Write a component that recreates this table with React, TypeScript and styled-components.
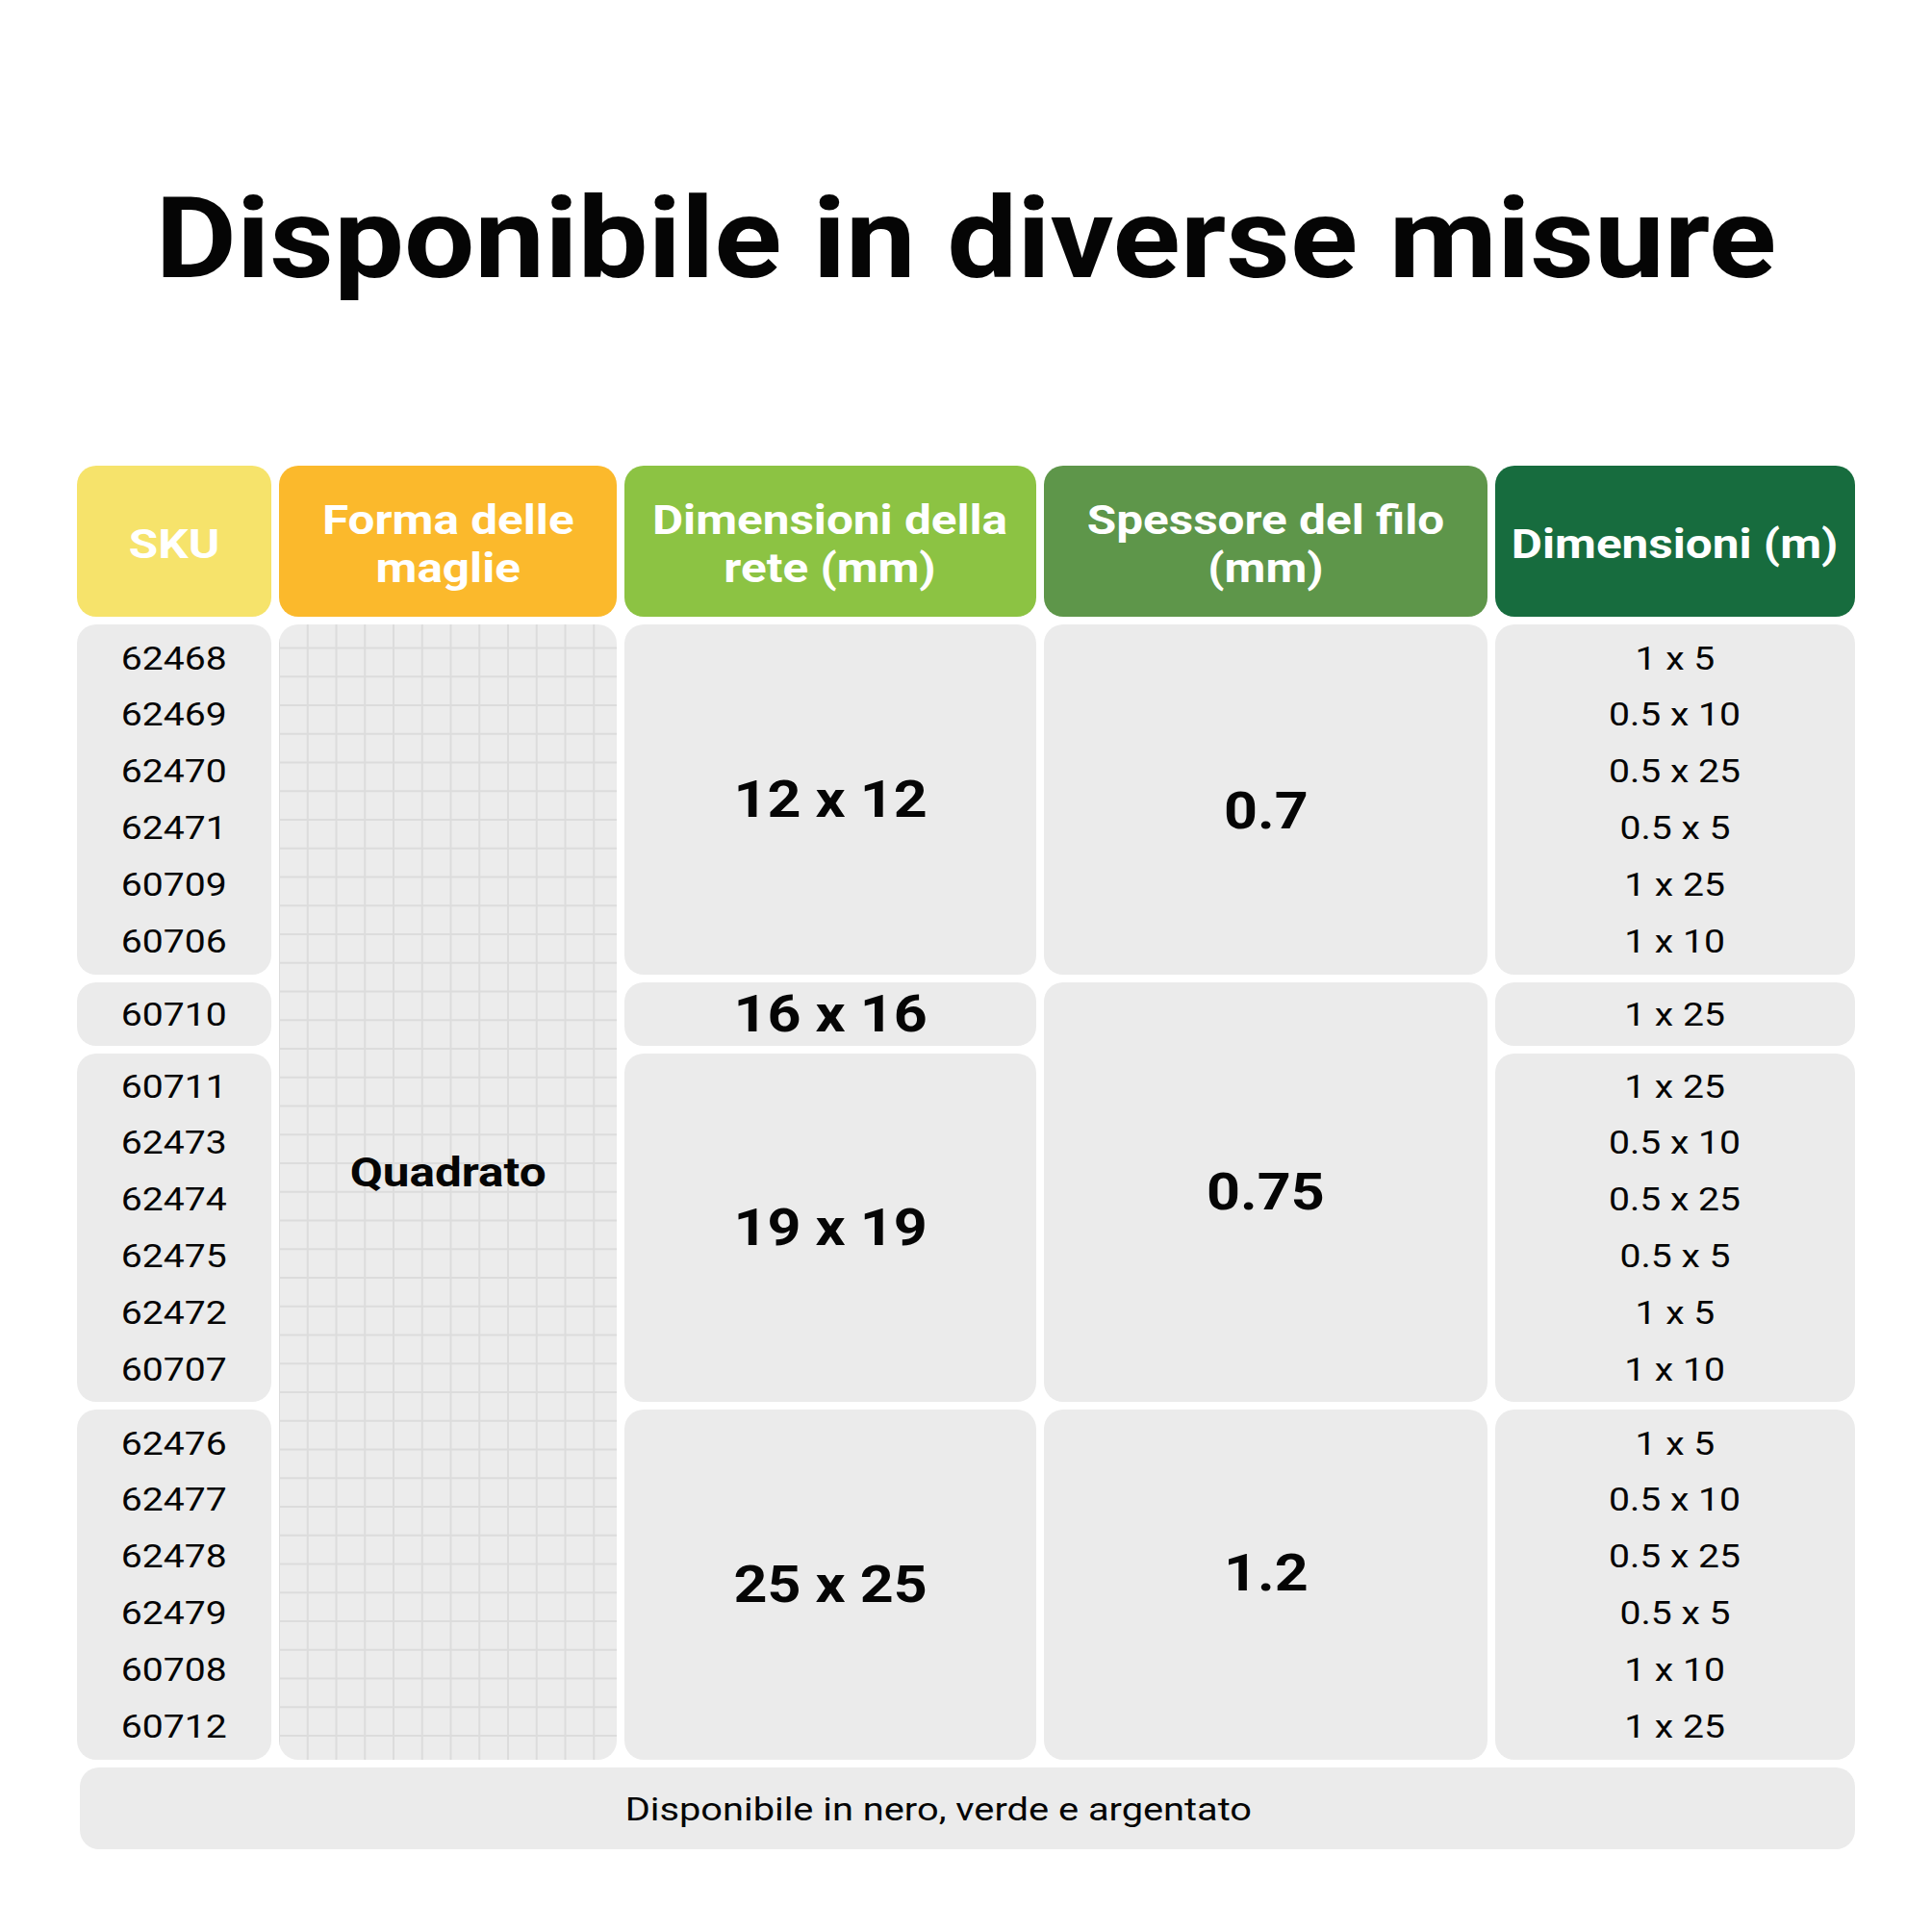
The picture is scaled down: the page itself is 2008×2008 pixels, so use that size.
import React from "react";
import styled, { createGlobalStyle } from "styled-components";

const Global = createGlobalStyle`
  html, body { margin: 0; padding: 0; background: #ffffff; }
  body { font-family: Roboto, "Liberation Sans", Arial, sans-serif; color: #0a0a0a; }
`;

const Page = styled.div`
  width: 2008px;
  height: 2008px;
  box-sizing: border-box;
  padding: 190px 80px 0 80px;
  background: #ffffff;
  display: flex;
  flex-direction: column;
  align-items: stretch;
`;

const Title = styled.h1`
  margin: 0 0 177px 0;
  height: 117px;
  font-family: Roboto, "Liberation Sans", sans-serif;
  font-weight: 700;
  font-size: 117px;
  line-height: 117px;
  color: #050505;
  text-align: center;
  white-space: nowrap;
`;

const Stretch = styled.span<{ $sx?: number }>`
  display: inline-block;
  transform: scaleX(${(p) => p.$sx ?? 1.15});
  transform-origin: center;
`;

const Table = styled.div`
  display: grid;
  grid-template-columns: 202px 351px 428px 461px 374px;
  grid-template-rows: 157px 364px 66px 362px 364px 85px;
  column-gap: 8px;
  row-gap: 8px;
`;

const Head = styled.div<{ $bg: string }>`
  background: ${(p) => p.$bg};
  border-radius: 20px;
  display: flex;
  align-items: center;
  justify-content: center;
  text-align: center;
  color: #ffffff;
  font-weight: 700;
  font-size: 43px;
  line-height: 50px;
  padding-top: 4px;
  box-sizing: border-box;
`;

const Cell = styled.div<{ $col: number; $row: string }>`
  grid-column: ${(p) => p.$col};
  grid-row: ${(p) => p.$row};
  background: #ebebeb;
  border-radius: 20px;
  display: flex;
  flex-direction: column;
  align-items: center;
  justify-content: center;
  box-sizing: border-box;
`;

const Line = styled.div`
  height: 58.8px;
  line-height: 58.8px;
  font-size: 34px;
  font-weight: 400;
  color: #050505;
  white-space: nowrap;
`;

const Big = styled.div<{ $dy?: number }>`
  font-size: 54px;
  line-height: 60px;
  font-weight: 700;
  color: #050505;
  white-space: nowrap;
  margin-top: ${(p) => (p.$dy ?? 0) * 2}px;
`;

const Mesh = styled.div`
  grid-column: 2;
  grid-row: 2 / 6;
  border-radius: 20px;
  background-color: #ececec;
  background-image:
    linear-gradient(to right, #dcdcdc 2px, transparent 2px),
    linear-gradient(to bottom, #dcdcdc 2px, transparent 2px);
  background-size: 29.75px 29.75px;
  background-position: -1px 23.5px;
  display: flex;
  align-items: center;
  justify-content: center;
  padding-bottom: 42px;
  box-sizing: border-box;
`;

const MeshLabel = styled.div`
  font-size: 43px;
  font-weight: 700;
  color: #050505;
  line-height: 50px;
`;

const Footer = styled.div`
  grid-column: 1 / -1;
  grid-row: 6;
  margin-left: 3px;
  background: #ebebeb;
  border-radius: 20px;
  display: flex;
  align-items: center;
  justify-content: center;
  padding-right: 60px;
  font-size: 34px;
  color: #050505;
`;

type Group = {
  row: string;
  skus: string[];
  dims: string[];
};

const groups: Group[] = [
  {
    row: "2",
    skus: ["62468", "62469", "62470", "62471", "60709", "60706"],
    dims: ["1 x 5", "0.5 x 10", "0.5 x 25", "0.5 x 5", "1 x 25", "1 x 10"],
  },
  { row: "3", skus: ["60710"], dims: ["1 x 25"] },
  {
    row: "4",
    skus: ["60711", "62473", "62474", "62475", "62472", "60707"],
    dims: ["1 x 25", "0.5 x 10", "0.5 x 25", "0.5 x 5", "1 x 5", "1 x 10"],
  },
  {
    row: "5",
    skus: ["62476", "62477", "62478", "62479", "60708", "60712"],
    dims: ["1 x 5", "0.5 x 10", "0.5 x 25", "0.5 x 5", "1 x 10", "1 x 25"],
  },
];

const rete = [
  { row: "2", v: "12 x 12" },
  { row: "3", v: "16 x 16" },
  { row: "4", v: "19 x 19" },
  { row: "5", v: "25 x 25" },
];

const spessore = [
  { row: "2", v: "0.7", dy: 12 },
  { row: "3 / 5", v: "0.75", dy: 0 },
  { row: "5", v: "1.2", dy: -12 },
];

export default function App() {
  return (
    <>
      <Global />
      <Page>
        <Title>
          <Stretch $sx={1.11}>Disponibile in diverse misure</Stretch>
        </Title>
        <Table>
          <Head $bg="#f6e36b">
            <Stretch>SKU</Stretch>
          </Head>
          <Head $bg="#fbb92c">
            <Stretch>
              Forma delle
              <br />
              maglie
            </Stretch>
          </Head>
          <Head $bg="#8cc343">
            <Stretch>
              Dimensioni della
              <br />
              rete (mm)
            </Stretch>
          </Head>
          <Head $bg="#5e964a">
            <Stretch>
              Spessore del filo
              <br />
              (mm)
            </Stretch>
          </Head>
          <Head $bg="#176c3e">
            <Stretch>Dimensioni (m)</Stretch>
          </Head>

          {groups.map((g) => (
            <Cell key={"sku" + g.row} $col={1} $row={g.row}>
              {g.skus.map((s) => (
                <Line key={s}>
                  <Stretch>{s}</Stretch>
                </Line>
              ))}
            </Cell>
          ))}

          <Mesh>
            <MeshLabel>
              <Stretch>Quadrato</Stretch>
            </MeshLabel>
          </Mesh>

          {rete.map((r) => (
            <Cell key={"rete" + r.row} $col={3} $row={r.row}>
              <Big>
                <Stretch $sx={1.13}>{r.v}</Stretch>
              </Big>
            </Cell>
          ))}

          {spessore.map((s) => (
            <Cell key={"sp" + s.row} $col={4} $row={s.row}>
              <Big $dy={s.dy}>
                <Stretch $sx={1.13}>{s.v}</Stretch>
              </Big>
            </Cell>
          ))}

          {groups.map((g) => (
            <Cell key={"dim" + g.row} $col={5} $row={g.row}>
              {g.dims.map((d, i) => (
                <Line key={i}>
                  <Stretch>{d}</Stretch>
                </Line>
              ))}
            </Cell>
          ))}

          <Footer>
            <Stretch $sx={1.17}>Disponibile in nero, verde e argentato</Stretch>
          </Footer>
        </Table>
      </Page>
    </>
  );
}
